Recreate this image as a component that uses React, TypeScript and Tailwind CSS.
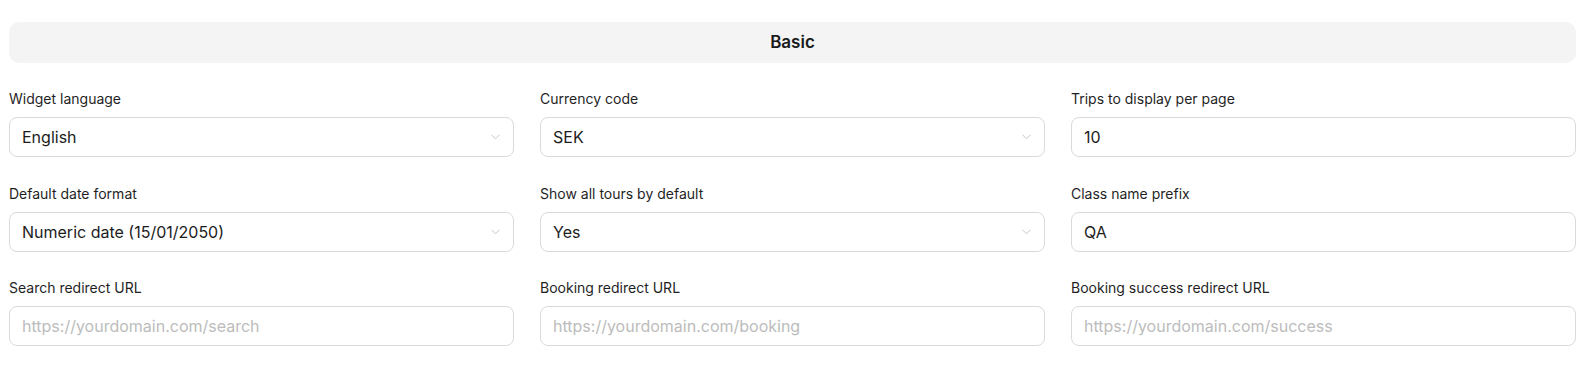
import React from "react";

type Field = {
  label: string;
  kind: "select" | "input";
  value?: string;
  placeholder?: string;
};

const fields: Field[] = [
  { label: "Widget language", kind: "select", value: "English" },
  { label: "Currency code", kind: "select", value: "SEK" },
  { label: "Trips to display per page", kind: "input", value: "10" },
  { label: "Default date format", kind: "select", value: "Numeric date (15/01/2050)" },
  { label: "Show all tours by default", kind: "select", value: "Yes" },
  { label: "Class name prefix", kind: "input", value: "QA" },
  { label: "Search redirect URL", kind: "input", placeholder: "https://yourdomain.com/search" },
  { label: "Booking redirect URL", kind: "input", placeholder: "https://yourdomain.com/booking" },
  { label: "Booking success redirect URL", kind: "input", placeholder: "https://yourdomain.com/success" },
];

function Chevron() {
  return (
    <svg width="9" height="6" viewBox="0 0 9 6" fill="none" className="absolute right-[13px] top-[16px]">
      <path d="M0.5 0.8 L4.5 4.8 L8.5 0.8" stroke="#c4c4c4" strokeWidth="1" />
    </svg>
  );
}

function FieldBox({ field }: { field: Field }) {
  return (
    <div className="flex flex-col">
      <label className="text-sm leading-5 text-[#1f1f1f] mb-2">{field.label}</label>
      <div className="relative h-10 rounded-lg border border-[#dadada] bg-white flex items-center px-3">
        {field.value ? (
          <span className="text-base text-[#1c1c1c]">{field.value}</span>
        ) : (
          <span className="text-base text-[#bcbcbc]">{field.placeholder}</span>
        )}
        {field.kind === "select" && <Chevron />}
      </div>
    </div>
  );
}

export default function App() {
  return (
    <div
      className="bg-white w-[1591px] h-[367px] pl-[9px] pr-[15px] pt-[22px]"
      style={{ fontFamily: "Inter, 'Noto Sans', sans-serif" }}
    >
      <div className="h-[41px] rounded-[10px] bg-[#f4f4f4] flex items-center justify-center">
        <span className="text-[17px] font-semibold text-[#1a1a1a]">Basic</span>
      </div>
      <div className="grid grid-cols-3 gap-x-[26px] gap-y-[26.5px] mt-[26px]">
        {fields.map((f) => (
          <FieldBox key={f.label} field={f} />
        ))}
      </div>
    </div>
  );
}
